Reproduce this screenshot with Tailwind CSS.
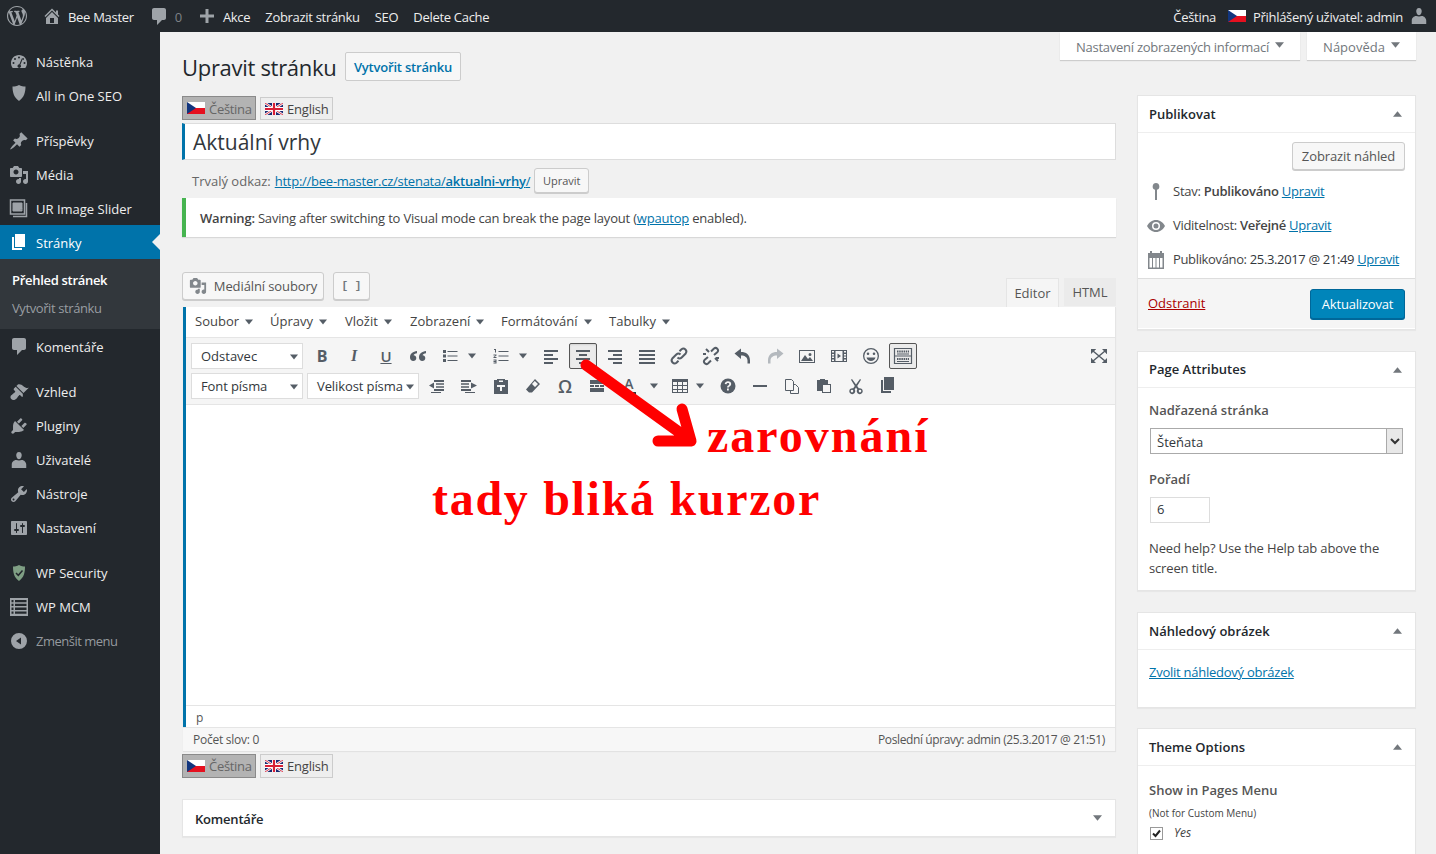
<!DOCTYPE html>
<html lang="cs">
<head>
    <meta charset="UTF-8">
    <meta name="viewport" content="width=device-width, initial-scale=1.0">
    <title>Upravit stránku</title>
    <script src="https://cdn.jsdelivr.net/npm/@tailwindcss/browser@4"></script>
</head>
<body class="relative h-[854px] overflow-hidden bg-[#f1f1f1] text-[13px] text-[#444] font-['Open_Sans',sans-serif]">
    <svg class="hidden">
        <symbol id="flag-cz" viewBox="0 0 18 12"><rect width="18" height="6" fill="#fff"/><rect y="6" width="18" height="6" fill="#e5101f"/><path d="M0 0l9 6-9 6z" fill="#11357e"/></symbol>
        <symbol id="flag-en" viewBox="0 0 18 12"><rect width="18" height="12" fill="#1a2a72"/><path d="M0 0l18 12M18 0L0 12" stroke="#fff" stroke-width="2.4"/><path d="M0 0l18 12M18 0L0 12" stroke="#d81f35" stroke-width=".9"/><path d="M9 0v12M0 6h18" stroke="#fff" stroke-width="4"/><path d="M9 0v12M0 6h18" stroke="#d81f35" stroke-width="2.2"/></symbol>
        <symbol id="media" viewBox="0 0 20 20"><path fill-rule="evenodd" d="M13 11V4c0-.55-.45-1-1-1h-1.670L9 1H5L3.670 3H2c-.55 0-1 .45-1 1v7c0 .55.45 1 1 1h10c.55 0 1-.45 1-1zM7 4.500c1.380 0 2.500 1.120 2.500 2.500S8.380 9.500 7 9.500 4.500 8.380 4.500 7 5.620 4.500 7 4.500zM14 6h5v10.500c0 1.380-1.120 2.500-2.500 2.500S14 17.880 14 16.500s1.120-2.500 2.500-2.500c.17 0 .34.02.5.05V9h-3V6zm-4 8.050V13h2v3.500c0 1.380-1.120 2.500-2.500 2.500S7 17.880 7 16.500 8.120 14 9.500 14c.17 0 .34.02.5.05z"/></symbol>
        <symbol id="caret" viewBox="0 0 10 6"><path d="M0 0h10L5 6z"/></symbol>
    </svg>

    <!-- admin bar -->
    <header class="flex h-8 items-center bg-[#23282d] tracking-[-0.3px] text-[#eee]">
        <svg class="ml-[7px] h-5 w-5 fill-[#9ea3a8]" viewBox="0 0 20 20"><path d="M20 10c0-5.510-4.490-10-10-10C4.480 0 0 4.490 0 10c0 5.520 4.480 10 10 10 5.510 0 10-4.480 10-10zM7.780 15.370L4.370 6.220c.55-.02 1.170-.08 1.170-.08.5-.06.44-1.130-.06-1.110 0 0-1.450.11-2.370.11-.18 0-.37 0-.58-.01C4.120 2.690 6.870 1.110 10 1.110c2.330 0 4.450.87 6.050 2.340-.68-.11-1.650.39-1.650 1.580 0 .74.45 1.360.9 2.100.35.61.55 1.360.55 2.460 0 1.490-1.400 5-1.400 5l-3.030-8.370c.54-.02.82-.17.82-.17.5-.05.44-1.250-.06-1.220 0 0-1.440.12-2.380.12-.87 0-2.330-.12-2.330-.12-.5-.03-.56 1.200-.06 1.220l.92.08 1.260 3.410zM17.410 10c.24-.64.74-1.870.43-4.250.7 1.290 1.050 2.710 1.050 4.250 0 3.290-1.730 6.240-4.400 7.780.97-2.590 1.940-5.200 2.920-7.780zM6.100 18.090C3.120 16.650 1.110 13.530 1.110 10c0-1.300.23-2.480.72-3.590C3.250 10.300 4.670 14.200 6.100 18.090zm4.030-6.630l2.580 6.980c-.86.29-1.760.45-2.710.45-.79 0-1.570-.11-2.290-.33.81-2.380 1.620-4.740 2.420-7.100z"/></svg>
        <svg class="ml-[15px] h-5 w-5 fill-[#9ea3a8]" viewBox="0 0 20 20"><path fill-rule="evenodd" d="M16 8.500l1.530 1.530-1.060 1.060L10 4.620l-6.470 6.470-1.060-1.060L10 2.500l4 4v-2h2v4zm-6-2.460l6 5.990V18H4v-5.970zM12 17v-5H8v5h4z"/></svg>
        <span class="ml-[6px] mt-1">Bee Master</span>
        <svg class="ml-[15px] h-5 w-5 fill-[#9ea3a8]" viewBox="0 0 20 20"><path d="M5 2h10c1.100 0 2 .9 2 2v8c0 1.100-.9 2-2 2h-2l-5 5v-5H5c-1.100 0-2-.9-2-2V4c0-1.100.9-2 2-2z"/></svg>
        <span class="ml-[6px] mt-1 text-[#7d8186]">0</span>
        <svg class="ml-[15px] h-5 w-5 fill-[#9ea3a8]" viewBox="0 0 20 20"><path d="M17 8.500v3h-5.500V17h-3v-5.500H3v-3h5.500V3h3v5.500z"/></svg>
        <span class="ml-[6px] mt-1">Akce</span>
        <span class="ml-[15px] mt-1">Zobrazit stránku</span>
        <span class="ml-[15px] mt-1">SEO</span>
        <span class="ml-[15px] mt-1">Delete Cache</span>
        <span class="ml-auto mt-1">Čeština</span>
        <svg class="ml-[12px] h-3 w-[18px]"><use href="#flag-cz"/></svg>
        <span class="ml-[7px] mt-1">Přihlášený uživatel: admin</span>
        <svg class="ml-[6px] mr-[7px] h-5 w-5 fill-[#9ea3a8]" viewBox="0 0 20 20"><path d="M10 9.250c-2.270 0-2.730-3.440-2.730-3.440C7 4.020 7.820 2 9.970 2c2.160 0 2.980 2.020 2.710 3.810 0 0-.41 3.440-2.680 3.440zm0 1.300L12.720 10c2.390 0 4.520 2.330 4.520 4.530V18H2.760v-3.470c0-2.250 1.940-4.480 4.470-4.480z"/></svg>
    </header>

    <div class="flex">
        <!-- sidebar -->
        <nav class="h-[822px] w-40 shrink-0 bg-[#23282d] pt-[13px] text-[#eee]">
            <a class="flex h-[34px] items-center">
                <svg class="ml-[9px] h-5 w-5 fill-[#9ea3a8]" viewBox="0 0 20 20"><path fill-rule="evenodd" d="M3.760 16h12.480c1.100-1.370 1.760-3.110 1.760-5 0-4.420-3.580-8-8-8s-8 3.580-8 8c0 1.890.66 3.630 1.760 5zM10 4.500a1 1 0 1 1 0 2 1 1 0 0 1 0-2zM6 6a1 1 0 1 1 0 2 1 1 0 0 1 0-2zm8 0a1 1 0 1 1 0 2 1 1 0 0 1 0-2zM4.500 10a1 1 0 1 1 0 2 1 1 0 0 1 0-2zm11 0a1 1 0 1 1 0 2 1 1 0 0 1 0-2zM12.800 6.500l.9.400-2.300 5.800a1.800 1.800 0 1 1-1-.4z"/></svg>
                <span class="ml-[7px] mt-[2px]">Nástěnka</span>
            </a>
            <a class="flex h-[34px] items-center">
                <svg class="ml-[9px] -mt-[6px] h-5 w-5 fill-[#9ea3a8]" viewBox="0 0 20 20"><path d="M10 2c2 1.200 4.500 1.500 6.500 1.500 0 6-1.500 11-6.500 14.500C5 14.500 3.500 9.500 3.500 3.500 5.500 3.500 8 3.200 10 2z"/></svg>
                <span class="ml-[7px] mt-[2px]">All in One SEO</span>
            </a>
            <a class="mt-[11px] flex h-[34px] items-center">
                <svg class="ml-[9px] h-5 w-5 fill-[#9ea3a8]" viewBox="0 0 20 20"><path d="M10.440 3.020l1.820-1.820 6.360 6.350-1.830 1.820c-1.050-.68-2.480-.57-3.410.36l-.75.75c-.92.93-1.040 2.350-.35 3.410l-1.830 1.820-2.410-2.410-2.800 2.790c-.42.42-3.380 2.710-3.800 2.290s1.860-3.390 2.280-3.810l2.790-2.790L4.100 9.360l1.830-1.820c1.050.69 2.480.57 3.400-.36l.75-.75c.93-.92 1.050-2.350.36-3.410z"/></svg>
                <span class="ml-[7px] mt-[2px]">Příspěvky</span>
            </a>
            <a class="flex h-[34px] items-center">
                <svg class="ml-[9px] h-5 w-5 fill-[#9ea3a8]"><use href="#media"/></svg>
                <span class="ml-[7px] mt-[2px]">Média</span>
            </a>
            <a class="flex h-[33px] items-center">
                <svg class="ml-[9px] h-5 w-5 fill-none stroke-[#9ea3a8]" viewBox="0 0 20 20"><path stroke-width="1.500" d="M1.500 1h14v14h-14zM4 17.500h13.500V4"/><path class="fill-[#9ea3a8]" stroke-width="1" d="M4 12V4h9v8zM4 11l3-4 2 2 2-2 2 3"/></svg>
                <span class="ml-[7px] mt-[2px]">UR Image Slider</span>
            </a>
            <a class="relative flex h-[34px] items-center bg-[#0073aa] text-white">
                <svg class="ml-[9px] h-5 w-5 fill-white" viewBox="0 0 20 20"><path d="M6 15V2h10v13H6zm-1 1h8v2H3V5h2v11z"/></svg>
                <span class="ml-[7px] mt-1">Stránky</span>
                <span class="absolute right-0 top-[9px] border-y-8 border-r-8 border-y-transparent border-r-[#f1f1f1]"></span>
            </a>
            <div class="h-[70px] bg-[#32373c] pt-[11px]">
                <a class="block pl-3 font-semibold leading-5 tracking-[-0.3px] text-white">Přehled stránek</a>
                <a class="mt-2 block pl-3 leading-5 tracking-[-0.4px] text-[#b4b9be]/80">Vytvořit stránku</a>
            </div>
            <a class="mt-px flex h-[34px] items-center">
                <svg class="ml-[9px] -mt-[2px] h-5 w-5 fill-[#9ea3a8]" viewBox="0 0 20 20"><path d="M5 2h10c1.100 0 2 .9 2 2v8c0 1.100-.9 2-2 2h-2l-5 5v-5H5c-1.100 0-2-.9-2-2V4c0-1.100.9-2 2-2z"/></svg>
                <span class="ml-[7px] mt-[2px]">Komentáře</span>
            </a>
            <a class="mt-[11px] flex h-[34px] items-center">
                <svg class="ml-[9px] h-5 w-5 fill-[#9ea3a8]" viewBox="0 0 20 20"><path d="M14.480 11.060L7.410 3.990l1.500-1.500c.5-.56 2.300-.47 3.510.32 1.210.8 1.430 1.280 2.910 2.100 1.180.64 2.450 1.260 4.450.85zm-.71.71L6.700 4.700 4.930 6.470c-.39.39-.39 1.020 0 1.410l1.060 1.060c.39.39.39 1.030 0 1.420-.6.6-1.430 1.110-2.210 1.690-.35.26-.7.53-1.010.84C1.430 13.230.84 15.700 2.240 17.100s3.700.96 5.030-.36c.28-.28.54-.57.8-.86.62-.87 1.300-1.900 1.950-2.470.4-.38 1.030-.39 1.420 0l1.060 1.060c.39.39 1.020.39 1.410 0z"/></svg>
                <span class="ml-[7px] mt-[2px]">Vzhled</span>
            </a>
            <a class="flex h-[34px] items-center">
                <svg class="ml-[9px] h-5 w-5 fill-[#9ea3a8]" viewBox="0 0 20 20"><path d="M13.110 4.360L9.870 7.600 8 5.730l3.240-3.240c.35-.34 1.050-.2 1.560.32.52.51.66 1.210.31 1.550zm-8 1.770l.91-1.120 9.010 9.010-1.190.84c-.71.71-2.630 1.160-3.820 1.160H6.140L4.900 17.260c-.59.59-1.540.59-2.120 0-.59-.58-.59-1.530 0-2.120l1.240-1.240v-3.880c0-1.130.4-3.190 1.090-3.890zm7.260 3.970l3.240-3.240c.34-.35 1.040-.21 1.550.31.52.51.66 1.210.31 1.550l-3.240 3.250z"/></svg>
                <span class="ml-[7px] mt-[2px]">Pluginy</span>
            </a>
            <a class="flex h-[34px] items-center">
                <svg class="ml-[9px] h-5 w-5 fill-[#9ea3a8]" viewBox="0 0 20 20"><path d="M10 9.250c-2.270 0-2.730-3.440-2.730-3.440C7 4.020 7.820 2 9.970 2c2.160 0 2.980 2.020 2.710 3.810 0 0-.41 3.440-2.680 3.440zm0 1.300L12.720 10c2.390 0 4.520 2.330 4.520 4.530V18H2.760v-3.470c0-2.250 1.940-4.480 4.470-4.480z"/></svg>
                <span class="ml-[7px] mt-[2px]">Uživatelé</span>
            </a>
            <a class="flex h-[34px] items-center">
                <svg class="ml-[9px] h-5 w-5 fill-[#9ea3a8]" viewBox="0 0 20 20"><path fill-rule="evenodd" d="M16.680 9.770c-1.340 1.340-3.300 1.670-4.950.99l-5.410 6.520c-.99.99-2.590.99-3.580 0s-.99-2.590 0-3.570l6.520-5.420c-.68-1.650-.35-3.610.99-4.950 1.280-1.280 3.120-1.620 4.720-1.060l-2.890 2.890 2.820 2.820 2.860-2.870c.53 1.580.18 3.390-1.080 4.670zM3.810 16.210c.4.39 1.040.39 1.430 0 .4-.4.4-1.040 0-1.430-.39-.4-1.030-.4-1.430 0-.39.39-.39 1.030 0 1.430z"/></svg>
                <span class="ml-[7px] mt-[2px]">Nástroje</span>
            </a>
            <a class="flex h-[34px] items-center">
                <svg class="ml-[9px] h-5 w-5 fill-[#9ea3a8]" viewBox="0 0 20 20"><path fill-rule="evenodd" d="M18 16V4c0-.55-.45-1-1-1H3c-.55 0-1 .45-1 1v12c0 .55.45 1 1 1h14c.55 0 1-.45 1-1zM8 11h1a1 1 0 0 1 0 2H8v1.500a.5.5 0 0 1-1 0V13H6a1 1 0 0 1 0-2h1V5.500a.5.5 0 0 1 1 0V11zm5-2h-1a1 1 0 0 1 0-2h1V5.500a.5.5 0 0 1 1 0V7h1a1 1 0 0 1 0 2h-1v5.500a.5.5 0 0 1-1 0V9z"/></svg>
                <span class="ml-[7px] mt-[2px]">Nastavení</span>
            </a>
            <a class="mt-[11px] flex h-[34px] items-center">
                <svg class="ml-[9px] h-5 w-5" viewBox="0 0 20 20"><path fill="#7f9f84" d="M10 2c2 1.200 4.500 1.500 6 1.500 0 6-1 11-6 14.500C5 14.500 4 9.500 4 3.500 5.500 3.500 8 3.200 10 2z"/><path fill="none" stroke="#23282d" stroke-width="1.500" d="M7 10l2.300 2.300L13.500 7.500"/></svg>
                <span class="ml-[7px] mt-[2px]">WP Security</span>
            </a>
            <a class="flex h-[34px] items-center">
                <svg class="ml-[9px] h-5 w-5 fill-[#9ea3a8]" viewBox="0 0 20 20"><path fill-rule="evenodd" d="M1 1h18v18H1zM2.500 3v2.300h2V3zm3.500 0v2.300h11.500V3zM2.500 6.800v2.300h2V6.800zm3.500 0v2.300h11.500V6.800zM2.500 10.600v2.300h2v-2.300zm3.500 0v2.300h11.500v-2.300zM2.500 14.400v2.300h2v-2.300zm3.500 0v2.300h11.500v-2.300z"/></svg>
                <span class="ml-[7px] mt-[2px]">WP MCM</span>
            </a>
            <a class="flex h-[34px] items-center text-[#b4b9be]/80">
                <svg class="ml-[9px] h-5 w-5 fill-[#9ea3a8]" viewBox="0 0 20 20"><path fill-rule="evenodd" d="M10 2a8 8 0 1 1 0 16 8 8 0 0 1 0-16zm2 4.500L7 10l5 3.500z"/></svg>
                <span class="ml-[7px] mt-[2px] tracking-[-0.5px]">Zmenšit menu</span>
            </a>
        </nav>

        <div class="relative min-w-0 flex-1 pl-[22px] pr-5">
            <!-- screen options -->
            <div class="relative z-10 -mb-2 flex h-7 justify-end gap-[7px] text-[#72777c]">
                <button class="flex h-7 w-[240px] items-center justify-center gap-[6px] bg-white pt-1 tracking-[-0.25px] shadow-[0_1px_1px_rgba(0,0,0,0.15)]">Nastavení zobrazených informací <svg class="-mt-[7px] h-[6px] w-[9px] fill-[#72777c]"><use href="#caret"/></svg></button>
                <button class="flex h-7 w-[109px] items-center justify-center gap-[6px] bg-white pt-1 shadow-[0_1px_1px_rgba(0,0,0,0.15)]">Nápověda <svg class="-mt-[7px] h-[6px] w-[9px] fill-[#72777c]"><use href="#caret"/></svg></button>
            </div>

            <div class="flex gap-[21px]">
                <!-- main column -->
                <main class="w-[934px] shrink-0">
                    <div class="flex h-[29px] items-center">
                        <h1 class="w-[154px] pt-[2px] text-[22px] tracking-[-0.3px] whitespace-nowrap text-[#23282d]">Upravit stránku</h1>
                        <a class="ml-[9px] flex h-[29px] w-[116px] items-center justify-center rounded-[2px] border border-[#ccc] bg-[#f7f7f7] pt-[3px] font-semibold tracking-[-0.2px] text-[#0073aa]">Vytvořit stránku</a>
                    </div>
                    <div class="mt-[15px] flex h-6 items-end gap-1">
                        <a class="flex h-6 w-[74px] items-center border border-[#8a8a8a] bg-[#b3b3b3] pl-1 tracking-[-0.3px] text-[#666]"><svg class="mr-[4px] h-3 w-[18px]"><use href="#flag-cz"/></svg><span class="mt-1">Čeština</span></a>
                        <a class="flex h-[23px] w-[73px] items-center border border-[#ccc] bg-[#eee] pl-1 tracking-[-0.2px]"><svg class="mr-[4px] h-3 w-[18px]"><use href="#flag-en"/></svg><span class="mt-[2px]">English</span></a>
                    </div>
                    <div class="mt-[3px] flex h-[37px] items-center border border-l-[3px] border-[#ddd] border-l-[#0073aa] bg-white pl-[8px] pt-[2px] text-[21px] text-[#32373c]">Aktuální vrhy</div>
                    <div class="mt-2 flex h-[25px] items-center pl-[10px] text-[#666]">
                        <span class="mt-[2px] font-medium">Trvalý odkaz:</span>
                        <a class="ml-1 mt-[2px] tracking-[-0.25px] text-[#0073aa] underline">http://bee-master.cz/stenata/<span class="font-semibold">aktualni-vrhy</span>/</a>
                        <button class="ml-1 h-[25px] w-[55px] rounded-[3px] border border-[#ccc] bg-[#f7f7f7] pt-[2px] text-[11px] text-[#555] shadow-[0_1px_0_#ccc]">Upravit</button>
                    </div>
                    <div class="mt-[5px] flex h-[39px] items-center border-l-4 border-[#46b450] bg-white pl-[14px] pt-[2px] tracking-[-0.2px] shadow-[0_1px_1px_rgba(0,0,0,0.1)]">
                        <p><b class="font-semibold">Warning:</b> Saving after switching to Visual mode can break the page layout (<a class="text-[#0073aa] underline">wpautop</a> enabled).</p>
                    </div>

                    <div class="mt-[35px] flex h-[35px] items-start">
                        <button class="flex h-[28px] w-[142px] items-center justify-center gap-[7px] rounded-[3px] border border-[#ccc] bg-[#f7f7f7] tracking-[-0.1px] text-[#555] shadow-[0_1px_0_#ccc]"><svg class="h-[18px] w-[18px] fill-[#82878c]"><use href="#media"/></svg><span class="mt-[2px]">Mediální soubory</span></button>
                        <button class="ml-[9px] flex h-[28px] w-[37px] items-center justify-center rounded-[3px] border border-[#ccc] bg-[#f7f7f7] text-[11px] font-bold text-[#72777c] shadow-[0_1px_0_#ccc] font-['Liberation_Mono',monospace]">[ ]</button>
                        <div class="ml-auto mt-[6px] flex h-[29px]">
                            <a class="flex h-[29px] w-[53px] items-center justify-center border border-b-0 border-[#e5e5e5] bg-[#f5f5f5] pt-px text-[#555]">Editor</a>
                            <a class="ml-[5px] flex h-[28px] w-[52px] items-center justify-center bg-[#ebebeb] pt-px text-[#555]">HTML</a>
                        </div>
                    </div>

                    <!-- editor -->
                    <section class="ml-px border-r border-[#e5e5e5] bg-white shadow-[0_1px_1px_rgba(0,0,0,0.06)]">
                        <div class="border-l-[3px] border-[#0073aa]">
                            <div class="flex h-[31px] items-center border-b border-[#e5e5e5] pl-[9px] text-[#444]">
                                <span class="flex w-[75px] items-center gap-[6px]">Soubor <svg class="h-[6px] w-[8px] fill-[#555d66]"><use href="#caret"/></svg></span>
                                <span class="flex w-[75px] items-center gap-[6px]">Úpravy <svg class="h-[6px] w-[8px] fill-[#555d66]"><use href="#caret"/></svg></span>
                                <span class="flex w-[65px] items-center gap-[6px]">Vložit <svg class="h-[6px] w-[8px] fill-[#555d66]"><use href="#caret"/></svg></span>
                                <span class="flex w-[91px] items-center gap-[6px]">Zobrazení <svg class="h-[6px] w-[8px] fill-[#555d66]"><use href="#caret"/></svg></span>
                                <span class="flex w-[108px] items-center gap-[6px]">Formátování <svg class="h-[6px] w-[8px] fill-[#555d66]"><use href="#caret"/></svg></span>
                                <span class="flex items-center gap-[6px]">Tabulky <svg class="h-[6px] w-[8px] fill-[#555d66]"><use href="#caret"/></svg></span>
                            </div>

                            <div class="h-[67px] border-b border-[#e5e5e5] bg-[#f5f5f5] pl-[5px] pt-[4px] fill-[#555d66] text-[#555d66]">
                                <div class="flex h-[28px] items-center">
                                    <span class="flex h-[26px] w-[112px] items-center justify-between border border-[#ddd] bg-white pl-[9px] pr-[4px] pt-[2px] text-[#32373c]">Odstavec<svg class="h-[6px] w-[8px] fill-[#555d66]"><use href="#caret"/></svg></span>
                                    <span class="ml-[3px] flex w-8 justify-center text-[16px] font-bold">B</span>
                                    <span class="flex w-8 justify-center text-[16px] font-bold italic font-['Liberation_Serif',serif]">I</span>
                                    <span class="flex w-8 justify-center text-[15px] font-semibold underline">U</span>
                                    <span class="flex w-8 justify-center"><svg class="h-5 w-5" viewBox="0 0 20 20"><path d="M9 5C5 5.500 2 7.500 2 11.500 2 13.800 3.500 15 5.200 15 7 15 8.300 13.700 8.300 12 8.300 10.300 7 9.200 5.600 9.200c.3-1 1.500-1.800 3.400-2zM18 5c-4 .5-7 2.500-7 6.500 0 2.300 1.500 3.500 3.200 3.500 1.800 0 3.100-1.300 3.100-3 0-1.700-1.300-2.800-2.700-2.800.3-1 1.500-1.800 3.400-2z"/></svg></span>
                                    <span class="flex w-[51px] items-center pl-[6px]"><svg class="h-5 w-5" viewBox="0 0 20 20"><path d="M3 4h3v3H3zm0 4.500h3v3H3zM3 13h3v3H3z"/><path d="M7.500 5h10v1h-10zm0 4.500h10v1h-10zm0 4.500h10v1h-10z"/></svg><svg class="ml-[8px] h-[6px] w-[8px]"><use href="#caret"/></svg></span>
                                    <span class="flex w-[50px] items-center pl-[6px]"><svg class="h-5 w-5" viewBox="0 0 20 20"><path d="M3 3h2v3.500H4V4H3zm-.5 5.500h3v1l-2 1.500h2v1h-3v-1l2-1.500h-2zm0 5h3v4h-3v-1h2v-.5h-2v-1h2V14.500h-2zM7.500 5h10v1h-10zm0 4.500h10v1h-10zm0 4.500h10v1h-10z"/></svg><svg class="ml-[8px] h-[6px] w-[8px]"><use href="#caret"/></svg></span>
                                    <span class="flex w-8 justify-center"><svg class="h-5 w-5" viewBox="0 0 20 20"><path d="M3 4h14v2H3zm0 4h9v2H3zm0 4h14v2H3zm0 4h9v2H3z"/></svg></span>
                                    <span class="mx-[2px] flex h-[26px] w-[28px] items-center justify-center rounded-[2px] border border-[#555] bg-[#ebebeb] shadow-[inset_0_1px_2px_rgba(0,0,0,0.1)]"><svg class="h-5 w-5" viewBox="0 0 20 20"><path d="M3 4h14v2H3zm3 4h8v2H6zm-3 4h14v2H3zm3 4h8v2H6z"/></svg></span>
                                    <span class="flex w-8 justify-center"><svg class="h-5 w-5" viewBox="0 0 20 20"><path d="M3 4h14v2H3zm5 4h9v2H8zm-5 4h14v2H3zm5 4h9v2H8z"/></svg></span>
                                    <span class="flex w-8 justify-center"><svg class="h-5 w-5" viewBox="0 0 20 20"><path d="M2 4h16v2H2zm0 4h16v2H2zm0 4h16v2H2zm0 4h16v2H2z"/></svg></span>
                                    <span class="flex w-8 justify-center"><svg class="h-5 w-5 fill-none stroke-[#555d66]" viewBox="0 0 20 20" stroke-width="2"><path d="M8.500 11.500a3 3 0 0 0 4.200 0l4-4a3 3 0 0 0-4.200-4.200l-2 2"/><path d="M11.500 8.500a3 3 0 0 0-4.200 0l-4 4a3 3 0 0 0 4.200 4.200l2-2"/></svg></span>
                                    <span class="flex w-8 justify-center"><svg class="h-5 w-5 fill-none stroke-[#555d66]" viewBox="0 0 20 20" stroke-width="2"><path d="M13 9l3.500-3a2.500 2.500 0 0 0-3.500-3.500L10 5.500M7 11l-3.500 3A2.500 2.500 0 0 0 7 17.500l3-3M5 3l3 3M17 15l-3-3M2 8h3M15 12h3"/></svg></span>
                                    <span class="flex w-8 justify-center"><svg class="h-5 w-5" viewBox="0 0 20 20"><path d="M8 2.500V6c5 0 9 2.500 9 8.500v3h-2.500v-3c0-3-2.500-5-6.500-5v3.500L1.500 7.500z"/></svg></span>
                                    <span class="flex w-8 justify-center"><svg class="h-5 w-5 fill-[#b4b9be]" viewBox="0 0 20 20"><path d="M12 2.500V6C7 6 3 8.500 3 14.500v3h2.500v-3c0-3 2.500-5 6.500-5v3.500l6.500-5.500z"/></svg></span>
                                    <span class="flex w-8 justify-center"><svg class="h-5 w-5" viewBox="0 0 20 20"><path fill-rule="evenodd" d="M2 4h16v13H2zm1 1v11h14V5zm1 10l4-6 3 4 2-2 3 4zm9-8a1.500 1.500 0 1 1 0 3 1.500 1.500 0 0 1 0-3z"/></svg></span>
                                    <span class="flex w-8 justify-center"><svg class="h-5 w-5" viewBox="0 0 20 20"><path fill-rule="evenodd" d="M2 4h16v12H2zm1 1v1.500h2V5zm12 0v1.500h2V5zM3 8v1.500h2V8zm12 0v1.500h2V8zM3 10.500V12h2v-1.500zm12 0V12h2v-1.500zM3 13.500V15h2v-1.500zm12 0V15h2v-1.500zM6.500 5v10h7V5zM8.500 7.500l3.500 2.500-3.500 2.500z"/></svg></span>
                                    <span class="flex w-8 justify-center"><svg class="h-5 w-5" viewBox="0 0 20 20"><path fill-rule="evenodd" d="M10 2a8 8 0 1 1 0 16 8 8 0 0 1 0-16zm0 1.300a6.700 6.700 0 1 0 0 13.400 6.700 6.700 0 0 0 0-13.400zM7 6.500a1.300 1.300 0 1 1 0 2.600 1.300 1.300 0 0 1 0-2.600zm6 0a1.300 1.300 0 1 1 0 2.600 1.300 1.300 0 0 1 0-2.600zM5.500 11.500h9C14 13.800 12.300 15 10 15s-4-1.200-4.500-3.500z"/></svg></span>
                                    <span class="mx-[2px] flex h-[26px] w-[28px] items-center justify-center rounded-[2px] border border-[#555] bg-[#ebebeb]"><svg class="h-5 w-5 fill-none stroke-[#555d66]" viewBox="0 0 20 20"><path stroke-width="1.200" d="M1.500 2.500h17v15h-17zM1.500 10h17"/><path stroke-width="2" stroke-dasharray="1.500 .7" d="M4 5.500h12M4 13h12"/><path stroke-width="1.200" d="M4 8h12M4 15.500h12"/></svg></span>
                                    <span class="ml-auto flex w-8 justify-center"><svg class="h-5 w-5" viewBox="0 0 20 20"><path d="M2 3h5L5.500 4.500 2 3zM18 3v5l-1.500-1.500zM2 17v-5l1.500 1.500zM18 17h-5l1.500-1.500z"/><path d="M2 3h5L2 8zM18 3v5l-5-5zM2 17v-5l5 5zM18 17h-5l5-5z"/><path fill="none" stroke="#555d66" stroke-width="1.500" d="M4 5l12 10M16 5L4 15"/></svg></span>
                                </div>
                                <div class="mt-[2px] flex h-[28px] items-center">
                                    <span class="flex h-[26px] w-[112px] items-center justify-between border border-[#ddd] bg-white pl-[9px] pr-[4px] pt-[2px] tracking-[-0.1px] text-[#32373c]">Font písma<svg class="h-[6px] w-[8px] fill-[#555d66]"><use href="#caret"/></svg></span>
                                    <span class="ml-1 flex h-[26px] w-[112px] items-center justify-between border border-[#ddd] bg-white pl-[9px] pr-[4px] pt-[2px] tracking-[-0.1px] text-[#32373c]">Velikost písma<svg class="h-[6px] w-[8px] fill-[#555d66]"><use href="#caret"/></svg></span>
                                    <span class="ml-[2px] flex w-8 justify-center"><svg class="h-5 w-5" viewBox="0 0 20 20"><path d="M7 4h10v2H7zm2 3.300h8v1.500H9zm0 3h8v1.500H9zM7 13h10v2H7zM2 9.500L7 6.500v6zM4 16h10v1H4z"/></svg></span>
                                    <span class="flex w-8 justify-center"><svg class="h-5 w-5" viewBox="0 0 20 20"><path d="M2 4h10v2H2zm0 3.300h8v1.500H2zm0 3h8v1.500H2zM2 13h10v2H2zM18 9.500L12 6.500v6zM6 16h10v1H6z"/></svg></span>
                                    <span class="flex w-8 justify-center"><svg class="h-5 w-5" viewBox="0 0 20 20"><path fill-rule="evenodd" d="M3 4h3V3h8v1h3v14H3zm5 .5V6h4V4.500zM6 9v2h3v4h2v-4h3V9z"/></svg></span>
                                    <span class="flex w-8 justify-center"><svg class="h-5 w-5" viewBox="0 0 20 20"><path fill-rule="evenodd" d="M12 3l5 5-8 8.500H6L3 13.500zM11.800 5L9 8l3 3 3-3z"/></svg></span>
                                    <span class="flex w-8 justify-center text-[18px] font-semibold">Ω</span>
                                    <span class="flex w-8 justify-center"><svg class="h-5 w-5" viewBox="0 0 20 20"><path d="M3 4h14v4H3zm0 5h4v2H3zm5 0h4v2H8zm5 0h4v2h-4zM3 12h14v4H3z"/></svg></span>
                                    <span class="flex w-[51px] items-center pl-[9px]"><span class="flex h-5 w-[14px] flex-col items-center text-[14px] font-semibold leading-[16px]">A<span class="h-[3px] w-[14px] bg-[#32373c]"></span></span><svg class="ml-[14px] h-[6px] w-[8px]"><use href="#caret"/></svg></span>
                                    <span class="flex w-[48px] items-center pl-[6px]"><svg class="h-5 w-5" viewBox="0 0 20 20"><path fill-rule="evenodd" d="M2 3h16v14H2zm1 3v3h4V6zm5 0v3h4V6zm5 0v3h4V6zM3 10v3h4v-3zm5 0v3h4v-3zm5 0v3h4v-3zM3 14v2h4v-2zm5 0v2h4v-2zm5 0v2h4v-2z"/></svg><svg class="ml-[6px] h-[6px] w-[8px]"><use href="#caret"/></svg></span>
                                    <span class="flex w-8 justify-center"><svg class="h-5 w-5" viewBox="0 0 20 20"><circle cx="10" cy="10" r="7.500"/><path fill="#f5f5f5" d="M9 11.500c0-2 2.300-2 2.300-3.500 0-.7-.6-1.100-1.300-1.100-.8 0-1.400.5-1.500 1.300l-1.800-.3C7 6.300 8.300 5.300 10 5.300c1.900 0 3.200 1 3.200 2.600 0 2.200-2.400 2.300-2.400 3.600zM9 12.500h1.800v1.900H9z"/></svg></span>
                                    <span class="flex w-8 justify-center"><svg class="h-5 w-5" viewBox="0 0 20 20"><path d="M3 9h14v2H3z"/></svg></span>
                                    <span class="flex w-8 justify-center"><svg class="h-5 w-5 fill-none stroke-[#555d66]" viewBox="0 0 20 20"><path d="M3.500 3.500h6l2 2v9h-8zM11.500 8.500h2l3 3v6h-8v-3"/></svg></span>
                                    <span class="flex w-8 justify-center"><svg class="h-5 w-5" viewBox="0 0 20 20"><path fill-rule="evenodd" d="M3 4h3V3h5v1h3v4h3v9H8v-2H3zm6 5v7h7V9z"/></svg></span>
                                    <span class="flex w-8 justify-center"><svg class="h-5 w-5" viewBox="0 0 20 20"><path fill-rule="evenodd" d="M6 3l4 5.500L14 3l1 .7L11.200 10l1.600 2.300a3 3 0 1 1-1.500 1.100L10 11.500l-1.300 1.900a3 3 0 1 1-1.500-1.100L8.800 10 5 3.700zM6 13.800a1.300 1.300 0 1 0 0 2.600 1.300 1.300 0 0 0 0-2.600zm8 0a1.300 1.300 0 1 0 0 2.600 1.300 1.300 0 0 0 0-2.600z"/></svg></span>
                                    <span class="flex w-8 justify-center"><svg class="-mt-[3px] h-5 w-5" viewBox="0 0 20 20"><path d="M6 2h10v13H6zM5 5v11h8v2H3V5z"/></svg></span>
                                </div>
                            </div>

                            <div class="h-[300px]"></div>
                            <div class="flex h-[22px] items-center border-t border-[#e5e5e5] pl-[10px] pt-[2px] text-[12px] text-[#555]">p</div>
                        </div>
                        <div class="flex h-[24px] items-center justify-between border-t border-[#e5e5e5] bg-[#f7f7f7] px-[10px] text-[12px] text-[#555]">
                            <span class="tracking-[-0.25px]">Počet slov: 0</span>
                            <span class="tracking-[-0.38px]">Poslední úpravy: admin (25.3.2017 @ 21:51)</span>
                        </div>
                    </section>

                    <div class="mt-[3px] flex h-6 items-end gap-1">
                        <a class="flex h-6 w-[74px] items-center border border-[#8a8a8a] bg-[#b3b3b3] pl-1 tracking-[-0.3px] text-[#666]"><svg class="mr-[4px] h-3 w-[18px]"><use href="#flag-cz"/></svg><span class="mt-[2px]">Čeština</span></a>
                        <a class="flex h-6 w-[73px] items-center border border-[#ccc] bg-[#eee] pl-1 tracking-[-0.2px]"><svg class="mr-[4px] h-3 w-[18px]"><use href="#flag-en"/></svg><span class="mt-[2px]">English</span></a>
                    </div>
                    <div class="mt-[21px] flex h-[38px] items-center justify-between border border-[#e5e5e5] bg-white pl-3 pr-[13px] font-semibold tracking-[-0.2px] text-[#23282d] shadow-[0_1px_1px_rgba(0,0,0,0.04)]">
                        <span class="mt-1">Komentáře</span>
                        <svg class="h-[6px] w-[9px] fill-[#72777c]"><use href="#caret"/></svg>
                    </div>
                </main>

                <!-- side column -->
                <aside class="w-[279px] shrink-0 pt-[43px]">
                    <section class="h-[235px] border border-[#e5e5e5] bg-white shadow-[0_1px_1px_rgba(0,0,0,0.04)]">
                        <div class="flex h-[37px] items-center justify-between border-b border-[#eee] pl-[11px] pr-[13px] font-semibold text-[#23282d]"><span class="mt-[2px]">Publikovat</span><svg class="h-[6px] w-[9px] rotate-180 fill-[#72777c]"><use href="#caret"/></svg></div>
                        <div class="flex justify-end pr-[10px] pt-[9px]">
                            <button class="h-[28px] w-[113px] rounded-[3px] border border-[#ccc] bg-[#f7f7f7] pt-px tracking-[-0.1px] text-[#555] shadow-[0_1px_0_#ccc]">Zobrazit náhled</button>
                        </div>
                        <div class="mt-[5px] flex h-[34px] items-center pl-[35px] tracking-[-0.25px]">
                            <svg class="absolute ml-[-27px] h-5 w-5 fill-[#82878c]" viewBox="0 0 20 20"><path d="M10 1a3.500 3.500 0 0 1 1 6.800V18H9V7.800A3.500 3.500 0 0 1 10 1z"/></svg>
                            <span>Stav: <b class="font-semibold">Publikováno</b> <a class="text-[#0073aa] underline">Upravit</a></span>
                        </div>
                        <div class="flex h-[34px] items-center pl-[35px] tracking-[-0.3px]">
                            <svg class="absolute ml-[-27px] h-5 w-5 fill-[#82878c]" viewBox="0 0 20 20"><path fill-rule="evenodd" d="M10 4c4 0 7 2.500 9 6-2 3.500-5 6-9 6s-7-2.500-9-6c2-3.500 5-6 9-6zm0 2a4 4 0 1 0 0 8 4 4 0 0 0 0-8zm0 1.500a2.500 2.500 0 1 1 0 5 2.500 2.500 0 0 1 0-5z"/></svg>
                            <span>Viditelnost: <b class="font-semibold">Veřejné</b> <a class="text-[#0073aa] underline">Upravit</a></span>
                        </div>
                        <div class="flex h-[34px] items-center pl-[35px] tracking-[-0.35px]">
                            <svg class="absolute ml-[-27px] h-5 w-5 fill-[#82878c]" viewBox="0 0 20 20"><path fill-rule="evenodd" d="M2 3h2V1h2v2h8V1h2v2h2v16H2zm1.500 5v9.500H6V8zm3.500 0v9.500h2.500V8zm3.500 0v9.500H13V8zM14 8v9.500h2.500V8z"/></svg>
                            <span>Publikováno: <b class="font-medium text-[#32373c]">25.3.2017 @ 21:49</b> <a class="text-[#0073aa] underline">Upravit</a></span>
                        </div>
                        <div class="mt-px flex h-[50px] items-center justify-between border-t border-[#ddd] bg-[#f5f5f5] px-[10px]">
                            <a class="text-[#a00] underline">Odstranit</a>
                            <button class="h-[30px] w-[95px] rounded-[3px] border border-[#006799] bg-[#0085ba] pt-[3px] tracking-[-0.2px] text-white shadow-[0_1px_0_#006799]">Aktualizovat</button>
                        </div>
                    </section>

                    <section class="mt-[21px] h-[240px] border border-[#e5e5e5] bg-white shadow-[0_1px_1px_rgba(0,0,0,0.04)]">
                        <div class="flex h-[36px] items-center justify-between border-b border-[#eee] pl-[11px] pr-[13px] font-semibold text-[#23282d]">Page Attributes<svg class="h-[6px] w-[9px] rotate-180 fill-[#72777c]"><use href="#caret"/></svg></div>
                        <p class="mt-[12px] pl-[11px] font-semibold leading-5 text-[#555]">Nadřazená stránka</p>
                        <div class="ml-3 mt-[8px] flex h-[26px] w-[253px] items-center justify-between border border-[#aaa] pl-[6px] text-[#32373c]"><span class="mt-[3px]">Šteňata</span><span class="flex h-[24px] w-[16px] items-center justify-center border-l border-[#aaa] bg-[#e8e8e8]"><svg class="h-[8px] w-[10px] fill-none stroke-[#333]" viewBox="0 0 10 8" stroke-width="2"><path d="M1 2l4 4 4-4"/></svg></span></div>
                        <p class="mt-[15px] pl-[11px] font-semibold leading-5 text-[#555]">Pořadí</p>
                        <div class="ml-3 mt-[8px] flex h-[26px] w-[60px] items-center border border-[#ddd] pl-[6px] text-[#32373c]">6</div>
                        <p class="mt-[15px] pl-[11px] pr-3 leading-5 tracking-[-0.15px]">Need help? Use the Help tab above the screen title.</p>
                    </section>

                    <section class="mt-[21px] h-[96px] border border-[#e5e5e5] bg-white shadow-[0_1px_1px_rgba(0,0,0,0.04)]">
                        <div class="flex h-[37px] items-center justify-between border-b border-[#eee] pl-[11px] pr-[13px] font-semibold text-[#23282d]"><span class="mt-[2px]">Náhledový obrázek</span><svg class="h-[6px] w-[9px] rotate-180 fill-[#72777c]"><use href="#caret"/></svg></div>
                        <a class="mt-[12px] block pl-[11px] leading-5 tracking-[-0.25px] text-[#0073aa] underline">Zvolit náhledový obrázek</a>
                    </section>

                    <section class="mt-5 h-[140px] border border-[#e5e5e5] bg-white shadow-[0_1px_1px_rgba(0,0,0,0.04)]">
                        <div class="flex h-[37px] items-center justify-between border-b border-[#eee] pl-[11px] pr-[13px] font-semibold text-[#23282d]"><span class="mt-[2px]">Theme Options</span><svg class="h-[6px] w-[9px] rotate-180 fill-[#72777c]"><use href="#caret"/></svg></div>
                        <p class="mt-[14px] pl-[11px] font-semibold leading-5 text-[#555]">Show in Pages Menu</p>
                        <p class="mt-[3px] pl-[11px] text-[10px] leading-5">(Not for Custom Menu)</p>
                        <div class="mt-[1px] flex items-center pl-3">
                            <span class="flex h-[13px] w-[13px] items-center justify-center border border-[#999] bg-white"><svg class="h-[11px] w-[11px] fill-none stroke-[#222]" viewBox="0 0 11 11" stroke-width="2"><path d="M2 5.500l2.500 2.500L9 2.500"/></svg></span>
                            <span class="ml-[11px] text-[12px] italic">Yes</span>
                        </div>
                    </section>
                </aside>
            </div>
        </div>
    </div>

    <!-- red annotation drawn over the screenshot -->
    <svg class="pointer-events-none absolute left-0 top-0 h-[854px] w-[1436px] fill-none stroke-[#ff0000]" viewBox="0 0 1436 854" stroke-width="11" stroke-linecap="round" stroke-linejoin="round"><path d="M586 365L690 440M682 409L691 441L658 441"/></svg>
    <span class="pointer-events-none absolute left-[707px] top-[408px] text-[48px] font-bold leading-[56px] tracking-[2px] text-[#ff0000] font-['Liberation_Serif',serif]">zarovnání</span>
    <span class="pointer-events-none absolute left-[432px] top-[471px] text-[48px] font-bold leading-[56px] tracking-[1.7px] text-[#ff0000] font-['Liberation_Serif',serif]">tady bliká kurzor</span>
</body>
</html>
